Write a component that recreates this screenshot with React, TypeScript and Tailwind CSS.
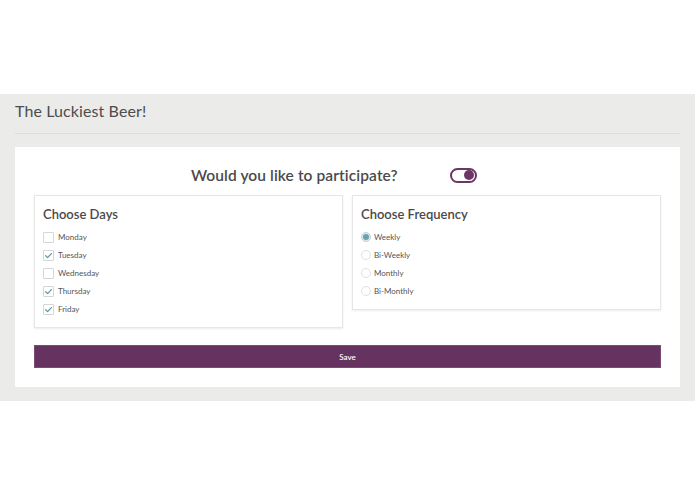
import React from "react";

const days = [
  { name: "Monday", checked: false },
  { name: "Tuesday", checked: true },
  { name: "Wednesday", checked: false },
  { name: "Thursday", checked: true },
  { name: "Friday", checked: true },
];

const frequencies = ["Weekly", "Bi-Weekly", "Monthly", "Bi-Monthly"];

function Checkbox({ checked }: { checked: boolean }) {
  return (
    <span className="flex h-[11px] w-[11px] items-center justify-center rounded-[1px] border border-[#d6d6d6] bg-white">
      {checked && (
        <svg viewBox="0 0 12 12" className="h-[9px] w-[9px]" fill="none">
          <path d="M2.2 6.3 L4.8 8.8 L9.8 3.4" stroke="#5f93a6" strokeWidth="1.6" strokeLinecap="round" strokeLinejoin="round" />
        </svg>
      )}
    </span>
  );
}

function Radio({ checked }: { checked: boolean }) {
  return (
    <span
      className={
        checked
          ? "flex h-[10px] w-[10px] items-center justify-center rounded-full border border-[#b9d3db] bg-[#dcebef]"
          : "flex h-[10px] w-[10px] items-center justify-center rounded-full border border-[#e0e0e0] bg-white"
      }
    >
      {checked && <span className="h-[6px] w-[6px] rounded-full bg-[#6d9fae]" />}
    </span>
  );
}

export default function App() {
  return (
    <div className="min-h-[494px] bg-white font-['Lato','Liberation_Sans',sans-serif] text-[#4a4a4a]">
      <div className="h-[94px]" />

      <section className="bg-[#ebebea] px-[15px] pt-[7px] pb-[14px]">
        <h1 className="text-[16px] leading-[20px] tracking-[0.1px] text-[#4d4d4d]">The Luckiest Beer!</h1>
        <div className="mt-[12px] border-t border-[#dcdcdb]" />

        <div className="mt-[13px] bg-white px-[19px] pt-[20px] pb-[19px]">
          <div className="ml-[157px] flex items-center gap-[52px]">
            <h2 className="text-[15.5px] font-semibold leading-[16px] tracking-[0.1px] text-[#4a4a4a]">
              Would you like to participate?
            </h2>
            <span className="flex h-[15px] w-[27px] items-center justify-end rounded-full border-2 border-[#6b3565] bg-white px-[1px]">
              <span className="h-[10px] w-[10px] rounded-full bg-[#6b3565]" />
            </span>
          </div>

          <div className="mt-[12px] flex items-start gap-[9px]">
            <div className="flex-1 border border-[#e6e6e6] px-[8px] pt-[10px] pb-[9px] shadow-[0_1px_2px_rgba(0,0,0,0.08)]">
              <h3 className="text-[13px] font-semibold leading-[16px] text-[#4a4a4a]">Choose Days</h3>
              <ul className="mt-[6px] flex flex-col">
                {days.map((d) => (
                  <li key={d.name} className="flex h-[18px] items-center gap-[4px]">
                    <Checkbox checked={d.checked} />
                    <span className="text-[8px] text-[#555]">{d.name}</span>
                  </li>
                ))}
              </ul>
            </div>

            <div className="flex-1 border border-[#e6e6e6] px-[8px] pt-[10px] pb-[9px] shadow-[0_1px_2px_rgba(0,0,0,0.08)]">
              <h3 className="text-[13px] font-semibold leading-[16px] text-[#4a4a4a]">Choose Frequency</h3>
              <ul className="mt-[6px] flex flex-col">
                {frequencies.map((f, i) => (
                  <li key={f} className="flex h-[18px] items-center gap-[3px]">
                    <Radio checked={i === 0} />
                    <span className="text-[8px] text-[#555]">{f}</span>
                  </li>
                ))}
              </ul>
            </div>
          </div>

          <button className="mt-[17px] flex h-[23px] w-full items-center justify-center border border-[#7d4a77] bg-[#66325f] text-[8px] font-semibold text-white">
            Save
          </button>
        </div>
      </section>
    </div>
  );
}
